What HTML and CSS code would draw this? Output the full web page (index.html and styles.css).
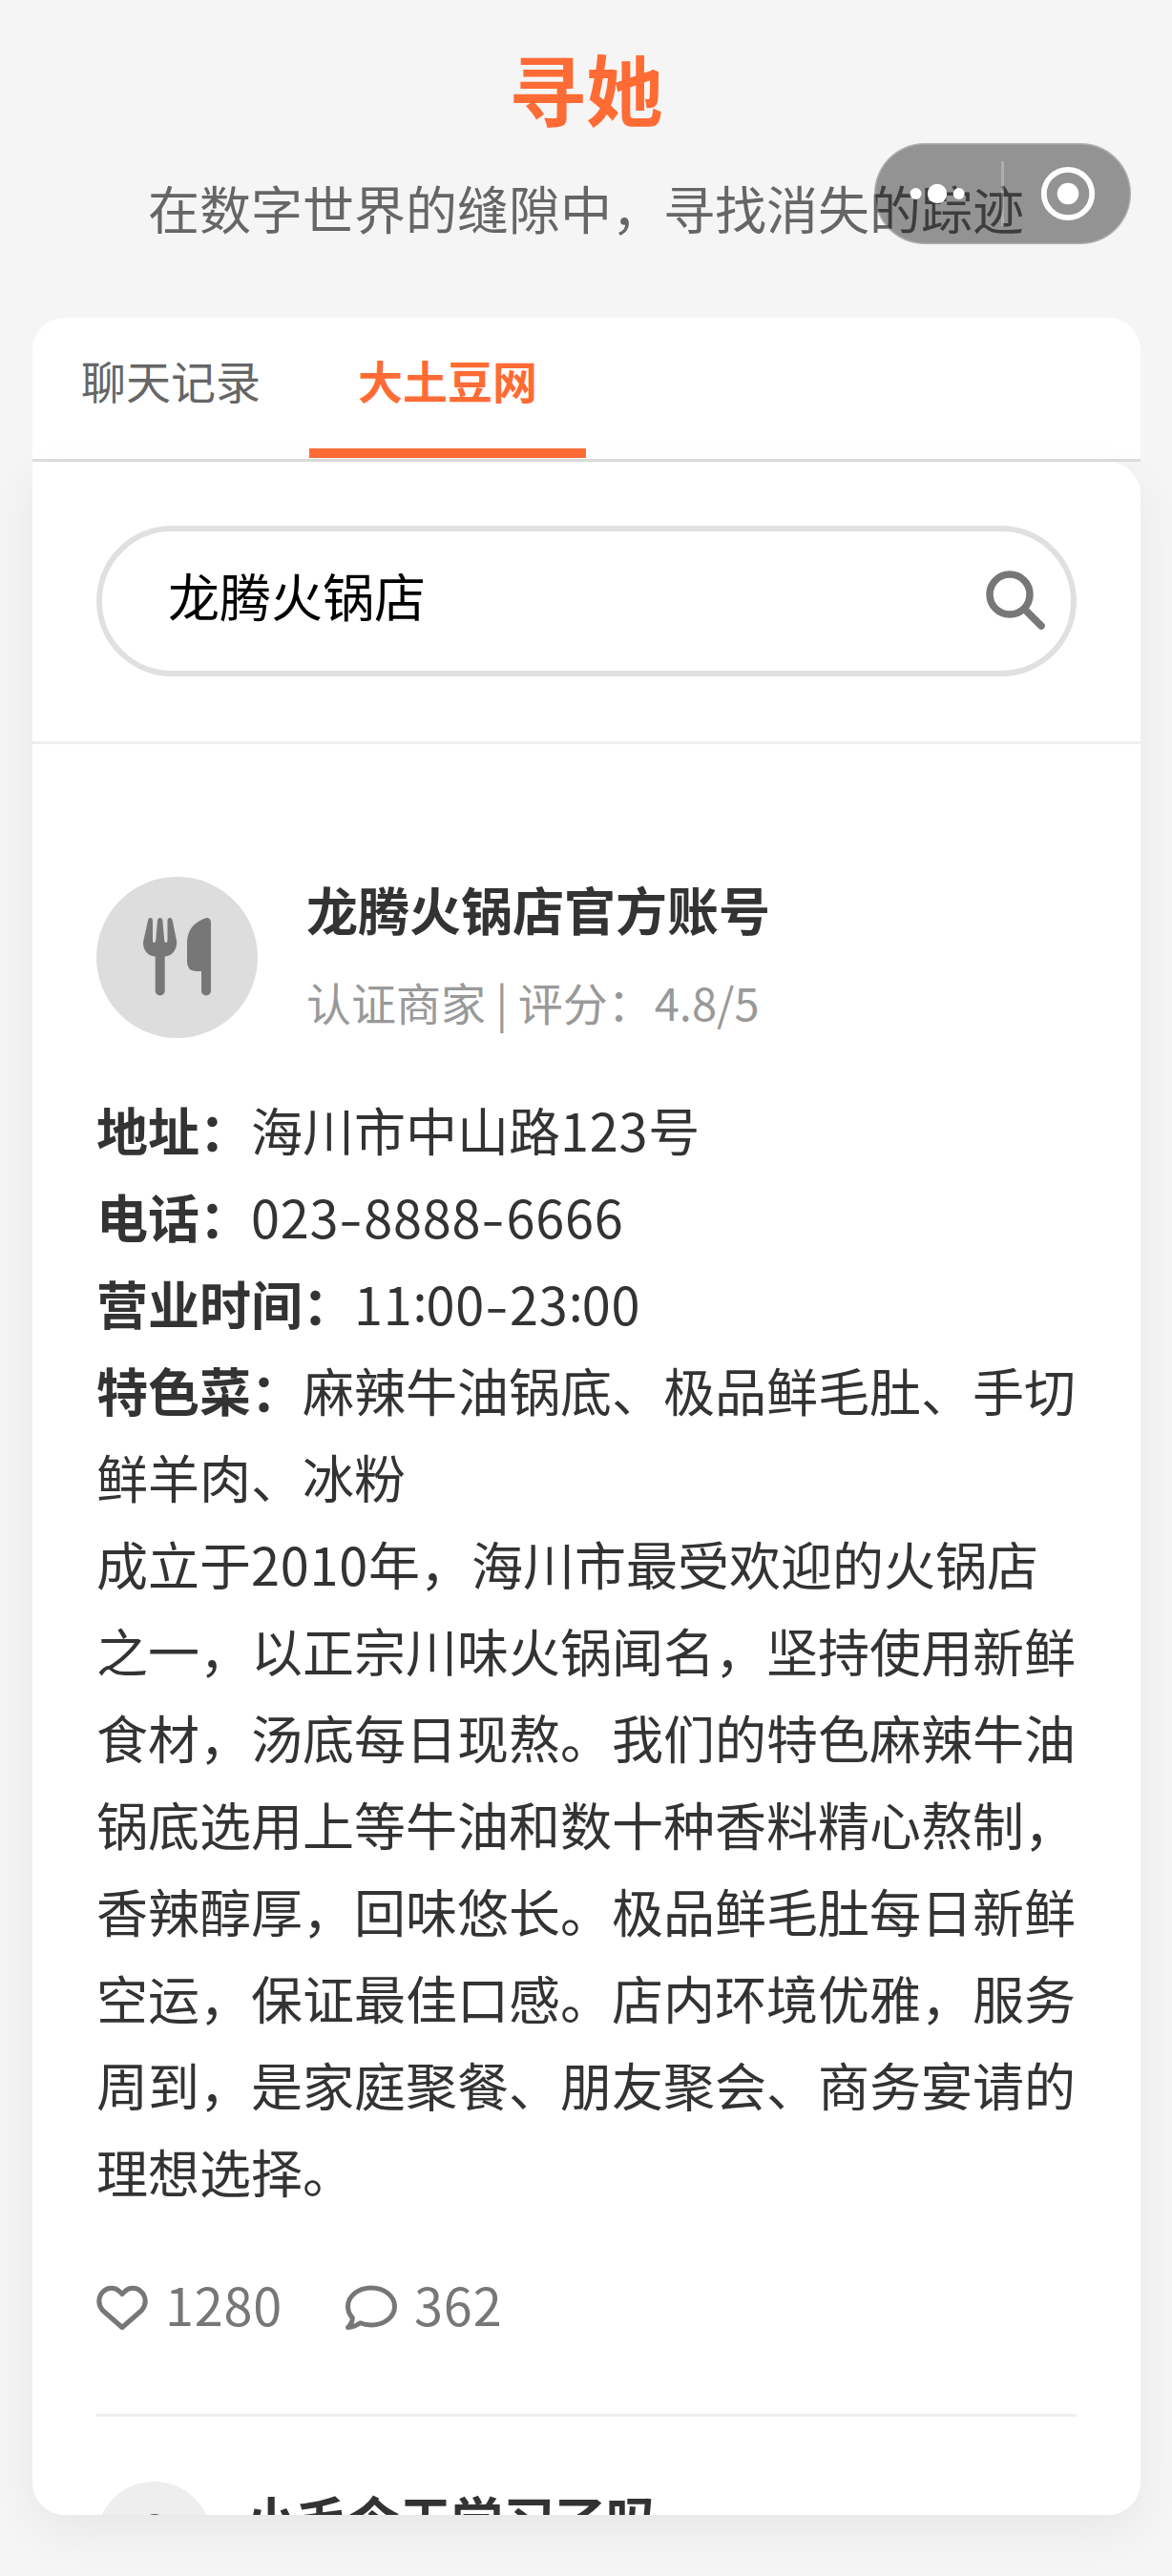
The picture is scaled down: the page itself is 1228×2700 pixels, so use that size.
FILE: index.html
```html
<!DOCTYPE html>
<html lang="zh-CN">
<head>
<meta charset="utf-8">
<title>寻她</title>
<link rel="stylesheet" href="styles.css">
</head>
<body>
<header class="header">
  <h1 class="title">寻她</h1>
  <p class="subtitle">在数字世界的缝隙中，寻找消失的踪迹</p>
</header>

<nav class="tabs">
  <a class="tab">聊天记录</a>
  <a class="tab tab-active">大土豆网</a>
</nav>

<main class="panel">
  <div class="search">
    <div class="search-box">
      <span class="search-text">龙腾火锅店</span>
      <svg class="search-icon" viewBox="0 0 64 64" fill="none" stroke="#777">
        <circle cx="25" cy="25" r="21" stroke-width="7.5"/>
        <path d="M41 41L58 58" stroke-width="7.6" stroke-linecap="round"/>
      </svg>
    </div>
  </div>

  <article class="post">
    <div class="post-head">
      <div class="avatar">
        <svg class="avatar-icon" viewBox="0 0 72 82" fill="#777">
          <path d="M5 3Q5.500 0 7.500 0Q10 0 10 3V24Q10 26 11.500 26Q13 26 13.200 24L15 3Q15.300 0 17.700 0Q20 0 20.400 3L22.200 24Q22.400 26 24 26Q25.500 26 25.500 24V3Q25.500 0 28 0Q30.200 0 30.800 3L35 24Q36 30 32.500 35Q29 40 22.700 40.500V76.500A5 5 0 0 1 12.700 76.500V40.500Q6 40 2.500 35Q-.800 30 .300 24Z"/>
          <path d="M66 0Q71 0 71 5V76.500A5 5 0 0 1 61 76.500V56H56Q46 56 46 46V26Q46 7 66 0Z"/>
        </svg>
      </div>
      <div class="who">
        <div class="name">龙腾火锅店官方账号</div>
        <div class="meta">认证商家 | 评分：<span class="score">4.8/5</span></div>
      </div>
    </div>
    <div class="post-body">
      <p><b>地址：</b>海川市中山路<span class="num">123</span>号</p>
      <p><b>电话：</b><span class="num">023<i class="dash">-</i>8888<i class="dash">-</i>6666</span></p>
      <p><b>营业时间：</b><span class="num">11<i class="colon">:</i>00<i class="dash">-</i>23<i class="colon">:</i>00</span></p>
      <p><b>特色菜：</b>麻辣牛油锅底、极品鲜毛肚、手切鲜羊肉、冰粉</p>
      <p>成立于<span class="num">2010</span>年，海川市最受欢迎的火锅店之一，以正宗川味火锅闻名，坚持使用新鲜食材，汤底每日现熬。我们的特色麻辣牛油锅底选用上等牛油和数十种香料精心熬制，香辣醇厚，回味悠长。极品鲜毛肚每日新鲜空运，保证最佳口感。店内环境优雅，服务周到，是家庭聚餐、朋友聚会、商务宴请的理想选择。</p>
    </div>
    <div class="stats">
      <span class="stat">
        <svg class="stat-icon" viewBox="0 0 54 48" fill="none" stroke="#777" stroke-width="5" stroke-linejoin="round">
          <path d="M27 9.500L24.500 7C19.500 2 12 2 7 7C1.500 12.500 1.500 20.500 6.500 26.500L27 44.500L47.500 26.500C52.500 20.500 52.500 12.500 47 7C42 2 34.500 2 29.500 7Z"/>
        </svg>
        <span class="num">1280</span>
      </span>
      <span class="stat">
        <svg class="stat-icon" viewBox="0 0 54 48" fill="none" stroke="#777" stroke-width="5" stroke-linejoin="round">
          <path d="M27 3C40.500 3 51.500 11.500 51.500 22.500C51.500 33.500 40.500 42 27 42C23 42 19 41.300 15.500 39.800C12 42.200 7.500 44.300 2.500 44.500C5.500 41.500 7.300 37.500 7.300 34.500C4.200 31 2.500 27 2.500 22.500C2.500 11.500 13.500 3 27 3Z"/>
        </svg>
        <span class="num">362</span>
      </span>
    </div>
  </article>

  <article class="comment">
    <div class="comment-avatar">
      <svg class="user-icon" viewBox="0 0 54 54" fill="#555">
        <circle cx="27" cy="13" r="13"/>
        <path d="M3 54Q3 32 27 32Q51 32 51 54Z"/>
      </svg>
    </div>
    <div class="comment-name">小毛今天学习了吗</div>
  </article>
</main>

<div class="capsule">
  <svg class="capsule-icons" viewBox="0 0 269 106">
    <g fill="#fff">
      <circle cx="43.500" cy="53" r="6"/>
      <circle cx="66" cy="53" r="10.200"/>
      <circle cx="88.700" cy="53" r="6"/>
      <circle cx="203" cy="53" r="11.300"/>
    </g>
    <path d="M134.500 19V87" stroke="#fff" stroke-opacity=".25" stroke-width="3"/>
    <circle cx="203" cy="53" r="25.200" fill="none" stroke="#fff" stroke-width="5.800"/>
  </svg>
</div>
</body>
</html>
```
FILE: styles.css
```css
* {
  box-sizing: border-box;
  margin: 0;
  padding: 0;
}

body {
  position: relative;
  height: 2700px;
  overflow: hidden;
  background: #f5f5f5;
  color: #333;
  font-family: "Noto Sans CJK SC", sans-serif;
  font-size: 54px;
  text-spacing-trim: space-all;
}

.header {
  height: 333px;
  padding-top: 31px;
  text-align: center;
}

.title {
  font-size: 81px;
  line-height: 120px;
  font-weight: 700;
  color: #ff6b35;
}

.subtitle {
  margin-top: 26px;
  line-height: 81px;
  color: #666;
}

.tabs {
  display: flex;
  height: 151px;
  margin: 0 33px 0 34px;
  background: #fff;
  border-bottom: 3px solid #ddd;
  border-radius: 34px 34px 0 0;
}

.tab {
  width: 290px;
  padding-top: 29px;
  text-align: center;
  font-size: 47px;
  line-height: 71px;
  color: #666;
}

.tab-active {
  height: 147px;
  border-bottom: 10px solid #ff6b35;
  color: #ff6b35;
  font-weight: 700;
}

.panel {
  height: 2152px;
  margin: 0 33px 0 34px;
  overflow: hidden;
  background: #fff;
  border-radius: 0 34px 34px 34px;
  box-shadow: 0 17px 50px rgba(0, 0, 0, .06);
}

.search {
  height: 296px;
  padding: 67px 67px 0;
  border-bottom: 3px solid #eee;
}

.search-box {
  display: flex;
  justify-content: space-between;
  height: 158px;
  padding: 0 25px 0 69px;
  border: 6px solid #e0e0e0;
  border-radius: 79px;
  color: #000;
}

.search-text {
  line-height: 134px;
}

.search-icon {
  width: 64px;
  height: 64px;
  margin-top: 41px;
}

.post {
  height: 1753px;
  margin: 0 67px;
  padding-top: 139px;
  border-bottom: 3px solid #eee;
}

.post-head {
  display: flex;
  gap: 51px;
  height: 218px;
}

.avatar {
  display: flex;
  flex: none;
  width: 169px;
  height: 169px;
  padding: 43px 0 0 49px;
  background: #ddd;
  border-radius: 50%;
}

.avatar-icon {
  width: 72px;
  height: 82px;
}

.name {
  margin-top: -7px;
  line-height: 81px;
  font-weight: 700;
}

.meta {
  margin-top: 21px;
  font-size: 47px;
  line-height: 71px;
  color: #999;
}

.score {
  margin-left: 2px;
}

.post-body {
  height: 1183px;
  padding-top: 1px;
  line-height: 91px;
}

.num {
  letter-spacing: .8px;
}

.dash,
.colon {
  display: inline-block;
  font-style: normal;
  text-align: center;
}

.dash {
  width: 26px;
  transform: scaleX(1.3);
}

.colon {
  width: 14px;
  transform: translateY(-4px);
}

.stats {
  display: flex;
  gap: 66px;
  margin-top: 54px;
  line-height: 81px;
  color: #777;
}

.stat {
  display: flex;
  align-items: center;
  gap: 18px;
}

.stat-icon {
  width: 54px;
  height: 48px;
  margin-top: 8px;
}

.comment {
  display: flex;
  gap: 35px;
  margin: 0 67px;
  padding-top: 68px;
}

.comment-avatar {
  width: 121px;
  height: 121px;
  padding: 34px 0 0 34px;
  background: #eee;
  border-radius: 50%;
}

.user-icon {
  display: block;
  width: 54px;
  height: 54px;
}

.comment-name {
  margin-top: -2px;
  line-height: 81px;
  font-weight: 700;
}

.capsule {
  position: absolute;
  top: 150px;
  left: 916px;
  width: 269px;
  height: 106px;
  background: rgba(0, 0, 0, .4);
  border-radius: 53px;
  box-shadow: inset 0 0 0 1.5px rgba(255, 255, 255, .25);
}

.capsule-icons {
  display: block;
  width: 269px;
  height: 106px;
}
```
